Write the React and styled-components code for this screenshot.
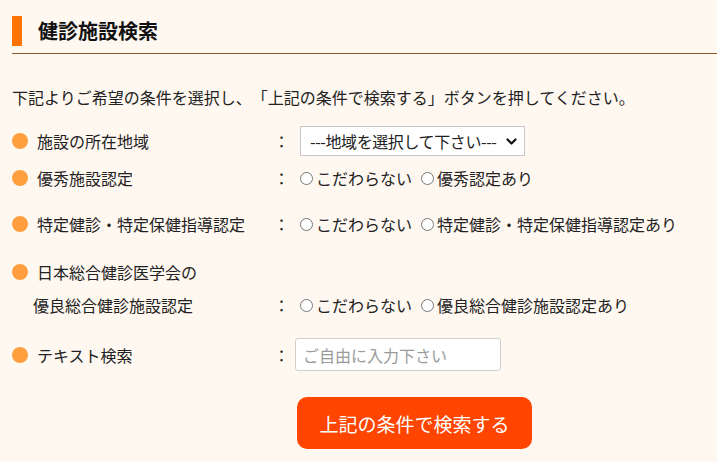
import React from "react";
import styled, { createGlobalStyle } from "styled-components";

const GlobalStyle = createGlobalStyle`
  body {
    margin: 0;
    background-color: #fff8f1;
    font-family: "Noto Sans CJK JP", "Noto Sans", sans-serif;
    color: #222;
    text-spacing-trim: space-all;
  }
`;

const Page = styled.div`
  padding: 16px 0 0 12px;
`;

const Header = styled.div`
  display: flex;
  align-items: center;
  gap: 16px;
  padding-bottom: 7px;
  border-bottom: 1px solid #8b5a2b;
`;

const HeaderBar = styled.span`
  width: 10px;
  height: 30px;
  background-color: #ff7300;
`;

const Title = styled.h1`
  margin: 0;
  font-size: 20px;
  font-weight: 700;
  line-height: 30px;
  color: #111;
`;

const Intro = styled.p`
  margin: 31px 0 17px;
  font-size: 16px;
  line-height: 24px;
`;

const Row = styled.div`
  display: grid;
  grid-template-columns: 256px 27px 1fr;
  align-items: ${(p) => (p.$end ? "end" : "center")};
  margin-top: ${(p) => p.$top || 0}px;
  font-size: 16px;
  line-height: 24px;
`;

const Label = styled.div`
  display: flex;
  flex-direction: column;
  gap: 9px;
`;

const LabelLine = styled.div`
  display: flex;
  align-items: center;
  gap: 9px;
  padding-left: ${(p) => p.$indent || 0}px;
`;

const Dot = styled.span`
  width: 16px;
  height: 16px;
  border-radius: 50%;
  background-color: #ff9f40;
  flex-shrink: 0;
`;

const Colon = styled.span`
  text-align: center;
`;

const Value = styled.div`
  display: flex;
  align-items: center;
  white-space: nowrap;
`;

const SelectWrap = styled.div`
  position: relative;
  margin-left: 5px;
  width: 225px;
  height: 30px;
`;

const Select = styled.select`
  appearance: none;
  box-sizing: border-box;
  width: 100%;
  height: 100%;
  padding: 0 18px 0 9px;
  font-family: inherit;
  font-size: 16px;
  letter-spacing: -0.4px;
  color: #222;
  background-color: #fff;
  border: 1px solid #c8c8c8;
  border-radius: 0;
`;

const Chevron = styled.svg`
  position: absolute;
  right: 8px;
  top: 50%;
  width: 11px;
  height: 8px;
  margin-top: -3px;
  pointer-events: none;
`;

const RadioLabel = styled.label`
  display: inline-flex;
  align-items: center;
  margin-right: 4px;
`;

const Radio = styled.input`
  margin: 1px 3px 0 5px;
  width: 13px;
  height: 13px;
`;

const TextInput = styled.input`
  box-sizing: border-box;
  width: 206px;
  height: 33px;
  padding: 0 7px;
  font-family: inherit;
  font-size: 16px;
  background-color: #fff;
  border: 1px solid #cfcfcf;
  border-radius: 3px;

  &::placeholder {
    color: #9a9a9a;
  }
`;

const ButtonRow = styled.div`
  padding: 26px 0 0 285px;
`;

const SearchButton = styled.button`
  width: 235px;
  height: 52px;
  border: none;
  border-radius: 10px;
  background-color: #ff4500;
  color: #fff;
  font-family: inherit;
  font-size: 19px;
  cursor: pointer;
`;

function RadioPair({ name, other }) {
  return (
    <Value>
      <RadioLabel>
        <Radio type="radio" name={name} />
        こだわらない
      </RadioLabel>
      <RadioLabel>
        <Radio type="radio" name={name} />
        {other}
      </RadioLabel>
    </Value>
  );
}

export default function App() {
  return (
    <>
      <GlobalStyle />
      <Page>
        <Header>
          <HeaderBar />
          <Title>健診施設検索</Title>
        </Header>
        <Intro>
          下記よりご希望の条件を選択し、「上記の条件で検索する」ボタンを押してください。
        </Intro>

        <Row>
          <LabelLine>
            <Dot />
            施設の所在地域
          </LabelLine>
          <Colon>：</Colon>
          <Value>
            <SelectWrap>
              <Select defaultValue="">
                <option value="">---地域を選択して下さい---</option>
              </Select>
              <Chevron viewBox="0 0 11 8">
                <path
                  d="M1.5 1.5 L5.5 5.5 L9.5 1.5"
                  fill="none"
                  stroke="#111"
                  strokeWidth="2.2"
                  strokeLinecap="round"
                  strokeLinejoin="round"
                />
              </Chevron>
            </SelectWrap>
          </Value>
        </Row>

        <Row $top={10}>
          <LabelLine>
            <Dot />
            優秀施設認定
          </LabelLine>
          <Colon>：</Colon>
          <RadioPair name="excellent" other="優秀認定あり" />
        </Row>

        <Row $top={22}>
          <LabelLine>
            <Dot />
            特定健診・特定保健指導認定
          </LabelLine>
          <Colon>：</Colon>
          <RadioPair name="specific" other="特定健診・特定保健指導認定あり" />
        </Row>

        <Row $top={24} $end>
          <Label>
            <LabelLine>
              <Dot />
              日本総合健診医学会の
            </LabelLine>
            <LabelLine $indent={21}>優良総合健診施設認定</LabelLine>
          </Label>
          <Colon>：</Colon>
          <RadioPair name="good" other="優良総合健診施設認定あり" />
        </Row>

        <Row $top={21}>
          <LabelLine>
            <Dot />
            テキスト検索
          </LabelLine>
          <Colon>：</Colon>
          <Value>
            <TextInput type="text" placeholder="ご自由に入力下さい" />
          </Value>
        </Row>

        <ButtonRow>
          <SearchButton type="button">上記の条件で検索する</SearchButton>
        </ButtonRow>
      </Page>
    </>
  );
}
